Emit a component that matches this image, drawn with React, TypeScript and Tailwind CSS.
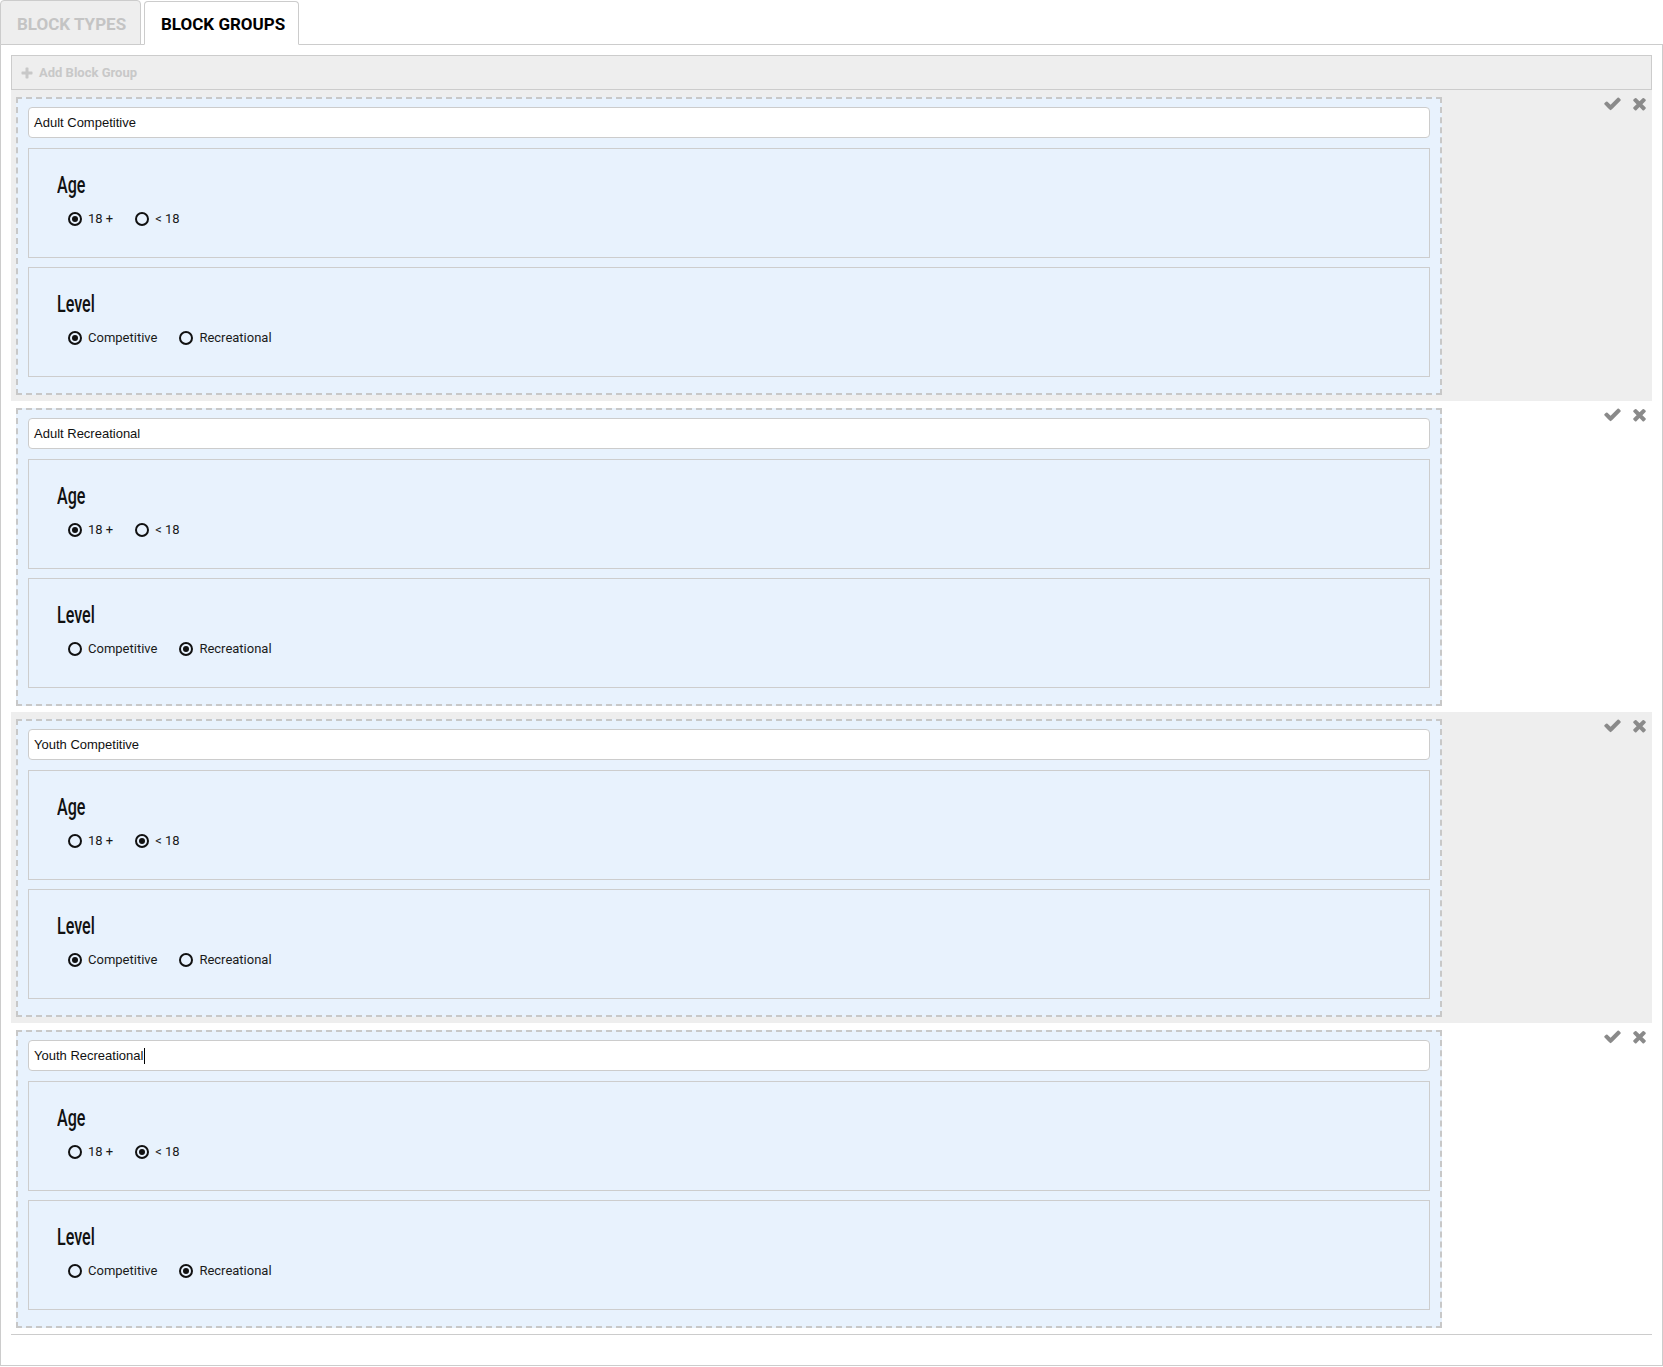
import React from "react"

type Group = {
  name: string
  age: "18+" | "<18"
  level: "Competitive" | "Recreational"
  caret?: boolean
}

const groups: Group[] = [
  { name: "Adult Competitive", age: "18+", level: "Competitive" },
  { name: "Adult Recreational", age: "18+", level: "Recreational" },
  { name: "Youth Competitive", age: "<18", level: "Competitive" },
  { name: "Youth Recreational", age: "<18", level: "Recreational", caret: true },
]

function CheckIcon() {
  return (
    <svg viewBox="0 0 1792 1792" className="h-[19px] w-[19px]" fill="#8a8a8a">
      <path d="M1671 566q0 40-28 68l-724 724-136 136q-28 28-68 28t-68-28l-136-136-362-362q-28-28-28-68t28-68l136-136q28-28 68-28t68 28l294 295 656-657q28-28 68-28t68 28l136 136q28 28 28 68z" />
    </svg>
  )
}

function TimesIcon() {
  return (
    <svg viewBox="0 0 1408 1792" className="h-[19px] w-[15px]" fill="#8a8a8a">
      <path d="M1298 1322q0 40-28 68l-136 136q-28 28-68 28t-68-28l-294-294-294 294q-28 28-68 28t-68-28l-136-136q-28-28-28-68t28-68l294-294-294-294q-28-28-28-68t28-68l136-136q28-28 68-28t68 28l294 294 294-294q28-28 68-28t68 28l136 136q28 28 28 68t-28 68l-294 294 294 294q28 28 28 68z" />
    </svg>
  )
}

function PlusIcon() {
  return (
    <svg viewBox="0 0 1408 1792" className="h-[14px] w-[12px]" fill="#c8c8c8">
      <path d="M1408 800v192q0 40-28 68t-68 28h-416v416q0 40-28 68t-68 28h-192q-40 0-68-28t-28-68v-416h-416q-40 0-68-28t-28-68v-192q0-40 28-68t68-28h416v-416q0-40 28-68t68-28h192q40 0 68 28t28 68v416h416q40 0 68 28t28 68z" />
    </svg>
  )
}

function Radio({ label, checked }: { label: string; checked: boolean }) {
  return (
    <label className="mr-[22px] flex items-center gap-[6px]">
      <span className="flex h-[14px] w-[14px] items-center justify-center rounded-full border-2 border-[#111]">
        {checked && <span className="h-[6px] w-[6px] rounded-full bg-[#111]" />}
      </span>
      <span className="text-[13px] text-[#1a1a1a] [font-family:Roboto,'Liberation_Sans',sans-serif]">{label}</span>
    </label>
  )
}

function Panel({ title, options, value }: { title: string; options: [string, string][]; value: string }) {
  return (
    <div className="h-[110px] border border-[#cdcdcd] bg-[#e8f2fd] pl-[28px] pt-[22px]">
      <h3 className="h-[30px] text-[23px] font-medium leading-[30px] text-[#111] [font-family:Roboto,'Liberation_Sans',sans-serif]">
        <span className="inline-block origin-left scale-x-[0.7]">{title}</span>
      </h3>
      <div className="ml-[11px] mt-[8px] flex h-[20px] items-center">
        {options.map(([key, label]) => (
          <Radio key={key} label={label} checked={key === value} />
        ))}
      </div>
    </div>
  )
}

function GroupRow({ group, shaded }: { group: Group; shaded: boolean }) {
  return (
    <div className={`flex justify-between pb-[6px] pl-[5px] pr-[5px] pt-[7px] ${shaded ? "bg-[#eeeeee]" : "bg-white"}`}>
      <div className="w-[1426px] border-2 border-dashed border-[#c8c8c8] bg-[#e8f2fd] px-[10px] pb-[8px] pt-[8px]">
        <div className="flex h-[31px] items-center rounded-[4px] border border-[#cccccc] bg-white pl-[5px] text-[13px] text-[#111] [font-family:'Liberation_Sans',Arial,sans-serif]">
          {group.name}
          {group.caret && <span className="ml-px h-[16px] w-px bg-black" />}
        </div>
        <div className="mt-[10px] mb-[9px]">
          <Panel
            title="Age"
            value={group.age}
            options={[
              ["18+", "18 +"],
              ["<18", "< 18"],
            ]}
          />
        </div>
        <Panel
          title="Level"
          value={group.level}
          options={[
            ["Competitive", "Competitive"],
            ["Recreational", "Recreational"],
          ]}
        />
        <div className="h-[8px]" />
      </div>
      <div className="-mt-[3px] flex items-start gap-[10px]">
        <CheckIcon />
        <TimesIcon />
      </div>
    </div>
  )
}

export default function App() {
  return (
    <div className="w-[1663px] bg-white [font-family:Roboto,'Liberation_Sans',sans-serif]">
      <div className="flex items-end gap-[3px] border-b border-[#cccccc]">
        <div className="-mb-px flex h-[45px] w-[141px] items-center rounded-t-[4px] border border-[#cccccc] bg-[#eeeeee] pl-[16px] pt-[4px] text-[17px] font-bold text-[#c4c4c4]">
          BLOCK TYPES
        </div>
        <div className="-mb-px flex h-[44px] w-[155px] items-center rounded-t-[4px] border border-[#cccccc] border-b-white bg-white pl-[16px] pt-[3px] text-[17px] font-bold text-black">
          BLOCK GROUPS
        </div>
      </div>
      <div className="border-x border-b border-[#cccccc] px-[10px] pb-[30px] pt-[10px]">
        <div className="flex h-[35px] items-center gap-[6px] border border-[#cccccc] bg-[#eeeeee] pl-[9px] text-[13px] font-bold text-[#c8c8c8]">
          <PlusIcon />
          <span>Add Block Group</span>
        </div>
        <div className="border-b border-[#cccccc]">
          {groups.map((g, i) => (
            <GroupRow key={g.name} group={g} shaded={i % 2 === 0} />
          ))}
        </div>
      </div>
    </div>
  )
}
